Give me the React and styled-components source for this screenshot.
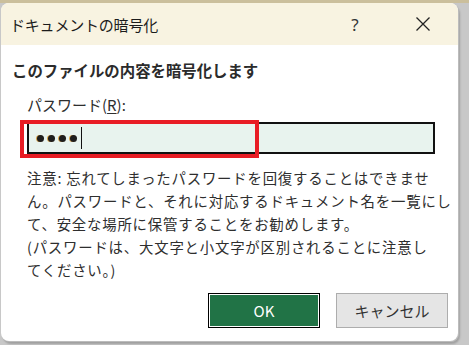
import React from 'react'
import styled, { createGlobalStyle } from 'styled-components'

const GlobalStyle = createGlobalStyle`
  html, body {
    margin: 0;
    padding: 0;
  }
  body {
    width: 469px;
    height: 345px;
    overflow: hidden;
    background: linear-gradient(to bottom, #cbbf9c 0, #cbbf9c 3px, transparent 3px),
      linear-gradient(to right, #c8c8c8 0, #c8c8c8 100%);
    font-family: "Noto Sans CJK JP", "Noto Sans", sans-serif;
  }
`

const Dialog = styled.div`
  margin: 3px 0 0 1px;
  width: 457px;
  height: 338px;
  background: #fff;
  border-radius: 8px;
  box-shadow: 1px 1px 0 #bcbcbc, 2px 3px 2px #a0a0a0;
  overflow: hidden;
  display: flex;
  flex-direction: column;
`

const TitleBar = styled.div`
  height: 42px;
  background: #f8f3e1;
  display: flex;
  align-items: center;
  padding-left: 9px;
  color: #1c1c1c;
  font-size: 15px;
`

const Title = styled.div`
  flex: 1;
  letter-spacing: -0.2px;
`

const TitleButton = styled.div`
  width: ${p => p.$w}px;
  display: flex;
  justify-content: center;
  align-items: center;
  font-family: "Noto Sans", sans-serif;
  font-size: 17px;
  color: #333;
`

const Body = styled.div`
  display: flex;
  flex-direction: column;
  padding: 14px 0 0 0;
`

const Heading = styled.div`
  padding-left: 11px;
  font-size: 15.4px;
  line-height: 22px;
  font-weight: 700;
  color: #2b2b2b;
`

const Section = styled.div`
  padding-left: 26px;
  display: flex;
  flex-direction: column;
`

const Label = styled.div`
  margin-top: 13px;
  font-size: 15px;
  line-height: 22px;
  color: #2e2e2e;
  u {
    text-underline-offset: 2px;
  }
`

const InputWrap = styled.div`
  position: relative;
  margin-top: 6px;
  width: 408px;
  height: 32px;
  box-sizing: border-box;
  border: 2px solid #111;
  background: #e8f3ee;
  display: flex;
  align-items: center;
  padding-left: 8px;
  gap: 4px;
`

const Dot = styled.span`
  width: 7px;
  height: 7px;
  border-radius: 50%;
  background: #1e1e1e;
  box-shadow: -1px 0 0 #d9a34a;
`

const Caret = styled.span`
  width: 1px;
  height: 22px;
  background: #111;
`

const Highlight = styled.div`
  position: absolute;
  left: -9px;
  top: -4px;
  width: 239px;
  height: 38px;
  box-sizing: border-box;
  border: 4px solid #e81c24;
  pointer-events: none;
`

const Note = styled.div`
  margin-top: 12px;
  font-size: 14.4px;
  line-height: 23px;
  color: #2e2e2e;
  letter-spacing: 0.8px;
`

const Line = styled.div`
  white-space: nowrap;
`

const Buttons = styled.div`
  margin-top: 12px;
  display: flex;
  justify-content: flex-end;
  gap: 16px;
  padding-right: 10px;
`

const Button = styled.button`
  width: 112px;
  height: 35px;
  box-sizing: border-box;
  font-family: "Noto Sans CJK JP", "Noto Sans", sans-serif;
  font-size: 15px;
  padding: 0;
  border: 1px solid ${p => (p.$primary ? '#000' : '#adadad')};
  background: ${p => (p.$primary ? '#217346' : '#e5e5e5')};
  color: ${p => (p.$primary ? '#fff' : '#333')};
  box-shadow: ${p => (p.$primary ? 'inset 0 0 0 1px #fff' : 'none')};
`

function App() {
  return (
    <>
      <GlobalStyle />
      <Dialog>
        <TitleBar>
          <Title>ドキュメントの暗号化</Title>
          <TitleButton $w={66}>?</TitleButton>
          <TitleButton $w={70}>
            <svg width="16" height="16" viewBox="0 0 16 16">
              <path d="M1.5 1.5 L14.5 14.5 M14.5 1.5 L1.5 14.5" stroke="#222" strokeWidth="1.3" fill="none" />
            </svg>
          </TitleButton>
        </TitleBar>
        <Body>
          <Heading>このファイルの内容を暗号化します</Heading>
          <Section>
            <Label>パスワード(<u>R</u>):</Label>
            <InputWrap>
              <Dot />
              <Dot />
              <Dot />
              <Dot />
              <Caret />
              <Highlight />
            </InputWrap>
            <Note>
              <Line>注意: 忘れてしまったパスワードを回復することはできませ</Line>
              <Line>ん。パスワードと、それに対応するドキュメント名を一覧にし</Line>
              <Line>て、安全な場所に保管することをお勧めします。</Line>
              <Line>(パスワードは、大文字と小文字が区別されることに注意し</Line>
              <Line>てください。)</Line>
            </Note>
          </Section>
          <Buttons>
            <Button $primary>OK</Button>
            <Button>キャンセル</Button>
          </Buttons>
        </Body>
      </Dialog>
    </>
  )
}

export default App
